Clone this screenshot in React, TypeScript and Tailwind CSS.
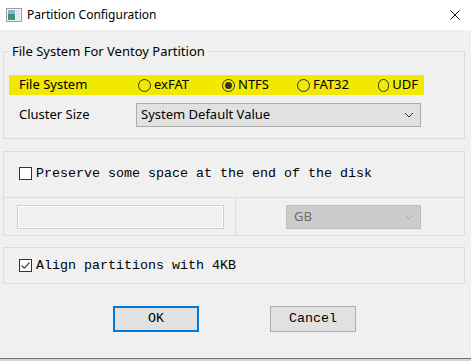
import React from 'react'

const ui = { fontFamily: '"Noto Sans", "Open Sans", Arial, sans-serif' }
const mono = { fontFamily: '"Liberation Mono", "Courier New", monospace' }

const Chevron = ({ color }: { color: string }) => (
  <svg width="10" height="6" viewBox="0 0 10 6">
    <path d="M1 1 L5 5 L9 1" fill="none" stroke={color} strokeWidth="1" />
  </svg>
)

const Radio = ({ label, checked, width }: { label: string; checked?: boolean; width: string }) => (
  <div className={`flex items-center ${width}`}>
    <span className="w-[13px] h-[13px] rounded-full border border-[#333333] flex items-center justify-center">
      {checked && <span className="w-[7px] h-[7px] rounded-full bg-[#333333]" />}
    </span>
    <span className="ml-[3px] text-[13px] text-black">{label}</span>
  </div>
)

const Check = ({ checked }: { checked?: boolean }) => (
  <span className="w-[13px] h-[13px] border border-[#333333] bg-white flex items-center justify-center shrink-0">
    {checked && (
      <svg width="11" height="11" viewBox="0 0 11 11">
        <path d="M1.5 5.5 L4.2 8.2 L9.5 2.5" fill="none" stroke="#4a4a4a" strokeWidth="1.2" />
      </svg>
    )}
  </span>
)

const App = () => {
  return (
    <div className="w-[471px] h-[361px] flex flex-col bg-[#f0f0f0] overflow-hidden" style={ui}>
      {/* title bar */}
      <div className="h-[30px] bg-white flex items-center shrink-0">
        <svg className="ml-[6px]" width="16" height="14" viewBox="0 0 16 14">
          <rect x="0.5" y="0.5" width="15" height="13" fill="#f4f4f4" stroke="#9a9a9a" />
          <rect x="2" y="2" width="7" height="10" fill="#3f8f84" />
          <rect x="2" y="2" width="7" height="4" fill="#7fb8c8" />
          <rect x="10" y="2" width="4" height="10" fill="#dfe6ea" />
        </svg>
        <span className="ml-[5px] text-[12px] text-black">Partition Configuration</span>
        <svg className="ml-auto mr-[11px]" width="10" height="10" viewBox="0 0 10 10">
          <path d="M0.5 0.5 L9.5 9.5 M9.5 0.5 L0.5 9.5" stroke="#111" strokeWidth="1" />
        </svg>
      </div>

      <div className="flex-1 flex flex-col">
        {/* file system group */}
        <fieldset className="mt-[13px] ml-[3px] w-[462px] border border-[#dcdcdc] pb-[11px]">
          <legend className="ml-[5px] px-[3px] text-[13px] leading-[16px] text-black">
            File System For Ventoy Partition
          </legend>
          <div className="mt-[16px] ml-[5px] w-[415px] h-[20px] bg-[#f1e900] flex items-center pl-[10px]">
            <span className="w-[119px] text-[13px] text-black">File System</span>
            <Radio label="exFAT" width="w-[84px]" />
            <Radio label="NTFS" checked width="w-[75px]" />
            <Radio label="FAT32" width="w-[81px]" />
            <Radio label="UDF" width="w-[40px]" />
          </div>
          <div className="mt-[8px] flex items-center pl-[15px]">
            <span className="w-[117px] text-[13px] text-black">Cluster Size</span>
            <div className="w-[285px] h-[24px] bg-[#e1e1e1] border border-[#adadad] flex items-center pl-[4px] pr-[6px]">
              <span className="text-[13px] text-black">System Default Value</span>
              <span className="ml-auto flex"><Chevron color="#333333" /></span>
            </div>
          </div>
        </fieldset>

        {/* preserve space group */}
        <div className="mt-[12px] ml-[3px] w-[462px] border border-[#dcdcdc]">
          <div className="h-[46px] border-b border-[#dcdcdc] flex items-center pl-[15px] pb-[2px]">
            <Check />
            <span className="ml-[4px] text-[13.33px] text-black" style={mono}>
              Preserve some space at the end of the disk
            </span>
          </div>
          <div className="h-[37px] flex">
            <div className="w-[232px] border-r border-[#dcdcdc] flex items-center pl-[13px]">
              <div className="w-[207px] h-[24px] border border-[#d0d0d0] shadow-[inset_0_0_0_1px_#ffffff] bg-[#f0f0f0]" />
            </div>
            <div className="flex-1 flex items-center pl-[50px]">
              <div className="w-[135px] h-[24px] bg-[#cccccc] border border-[#bfbfbf] flex items-center pl-[7px] pr-[6px]">
                <span className="text-[13px] text-[#6d6d6d]">GB</span>
                <span className="ml-auto flex"><Chevron color="#a8a8a8" /></span>
              </div>
            </div>
          </div>
        </div>

        {/* align group */}
        <div className="mt-[11px] ml-[3px] w-[462px] h-[37px] border border-[#dcdcdc] flex items-center pl-[15px]">
          <Check checked />
          <span className="ml-[4px] text-[13.33px] text-black" style={mono}>
            Align partitions with 4KB
          </span>
        </div>

        {/* buttons */}
        <div className="mt-[22px] flex pl-[113px] gap-[71px]">
          <button className="w-[86px] h-[26px] bg-[#e1e1e1] border-2 border-[#0078d7] text-[13.33px] text-black" style={mono}>
            OK
          </button>
          <button className="w-[86px] h-[26px] bg-[#e1e1e1] border border-[#adadad] text-[13.33px] text-black" style={mono}>
            Cancel
          </button>
        </div>
      </div>

      <div className="h-[1px] bg-[#707070] shrink-0" />
      <div className="h-[2px] bg-[#d6d6d6] shrink-0" />
    </div>
  )
}

export default App
